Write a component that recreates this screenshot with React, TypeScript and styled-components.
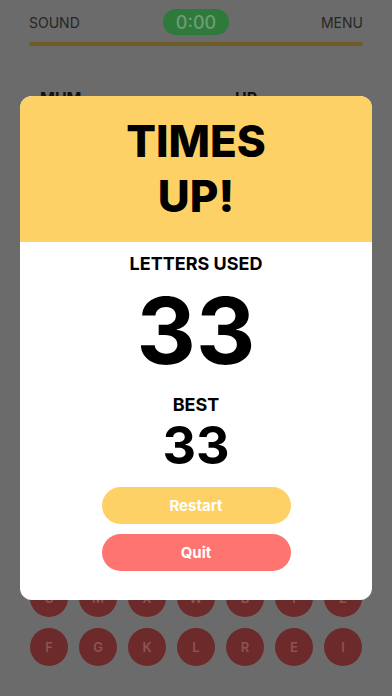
import styled, { createGlobalStyle } from "styled-components";

const GlobalStyle = createGlobalStyle`
  html, body {
    margin: 0;
    padding: 0;
    background: #6b6b6b;
  }
  * {
    box-sizing: border-box;
  }
`;

const rows = [
  ["C", "M", "X", "W", "B", "T", "Z"],
  ["F", "G", "K", "L", "R", "E", "I"],
];

function App() {
  return (
    <>
      <GlobalStyle />
      <Screen>
        <TopBar>
          <BarLabel>SOUND</BarLabel>
          <Timer>0:00</Timer>
          <BarLabel>MENU</BarLabel>
        </TopBar>
        <Progress />
        <Words>
          <Word>MUM</Word>
          <Word>UP</Word>
        </Words>
        <Spacer />
        <Keys>
          {rows.map((row, i) => (
            <KeyRow key={i}>
              {row.map((l) => (
                <Key key={l}>{l}</Key>
              ))}
            </KeyRow>
          ))}
        </Keys>

        <Modal>
          <ModalHead>
            <Title>
              TIMES
              <br />
              UP!
            </Title>
          </ModalHead>
          <ModalBody>
            <Label>LETTERS USED</Label>
            <Score>33</Score>
            <Label $top={16}>BEST</Label>
            <Best>33</Best>
            <Button $bg="#fed166" $top={15}>
              Restart
            </Button>
            <Button $bg="#fe7470" $top={10}>
              Quit
            </Button>
          </ModalBody>
        </Modal>
      </Screen>
    </>
  );
}

export default App;

const Screen = styled.div`
  position: relative;
  width: 392px;
  height: 696px;
  overflow: hidden;
  display: flex;
  flex-direction: column;
  padding: 0 29px;
  font-family: Inter, "Liberation Sans", sans-serif;
`;

const TopBar = styled.div`
  display: flex;
  align-items: center;
  justify-content: space-between;
  height: 26px;
  margin-top: 9px;
`;

const BarLabel = styled.div`
  font-size: 14px;
  color: #262626;
  width: 60px;

  &:last-child {
    text-align: right;
  }
`;

const Timer = styled.div`
  width: 66px;
  height: 26px;
  border-radius: 13px;
  background: #2e7a3a;
  color: #6f9c76;
  font-size: 18px;
  font-weight: 500;
  display: grid;
  place-items: center;
`;

const Progress = styled.div`
  height: 4px;
  margin-top: 7px;
  border-radius: 2px;
  background: #6e5c26;
`;

const Words = styled.div`
  display: grid;
  grid-template-columns: 195px 1fr;
  padding-left: 11px;
  margin-top: 42px;
`;

const Word = styled.div`
  font-size: 16px;
  font-weight: 700;
  color: #111;
`;

const Spacer = styled.div`
  flex: 1;
`;

const Keys = styled.div`
  display: flex;
  flex-direction: column;
  gap: 11px;
  margin-bottom: 30px;
  padding-left: 1px;
`;

const KeyRow = styled.div`
  display: flex;
  gap: 11px;
`;

const Key = styled.div`
  width: 38px;
  height: 38px;
  border-radius: 50%;
  background: #6d2a2a;
  color: #8a5551;
  font-size: 13px;
  font-weight: 600;
  display: grid;
  place-items: center;
`;

const Modal = styled.div`
  position: absolute;
  left: 20px;
  top: 96px;
  width: 352px;
  height: 504px;
  border-radius: 12px;
  overflow: hidden;
  background: #fff;
  display: flex;
  flex-direction: column;
`;

const ModalHead = styled.div`
  background: #fed166;
  height: 146px;
  display: grid;
  place-items: center;
`;

const Title = styled.div`
  font-size: 44px;
  line-height: 55px;
  font-weight: 800;
  color: #000;
  text-align: center;
`;

const ModalBody = styled.div`
  display: flex;
  flex-direction: column;
  align-items: center;
  padding-top: 11px;
  color: #000;
`;

const Label = styled.div<{ $top?: number }>`
  font-size: 18px;
  line-height: 22px;
  font-weight: 700;
  margin-top: ${(p) => p.$top ?? 0}px;
`;

const Score = styled.div`
  font-size: 92px;
  line-height: 94px;
  font-weight: 700;
  margin-top: 9px;
`;

const Best = styled.div`
  font-size: 52px;
  line-height: 52px;
  font-weight: 700;
  margin-top: 4px;
`;

const Button = styled.div<{ $bg: string; $top: number }>`
  width: 189px;
  height: 37px;
  border-radius: 19px;
  background: ${(p) => p.$bg};
  color: #fff;
  font-size: 15px;
  font-weight: 700;
  display: grid;
  place-items: center;
  margin-top: ${(p) => p.$top}px;
`;
